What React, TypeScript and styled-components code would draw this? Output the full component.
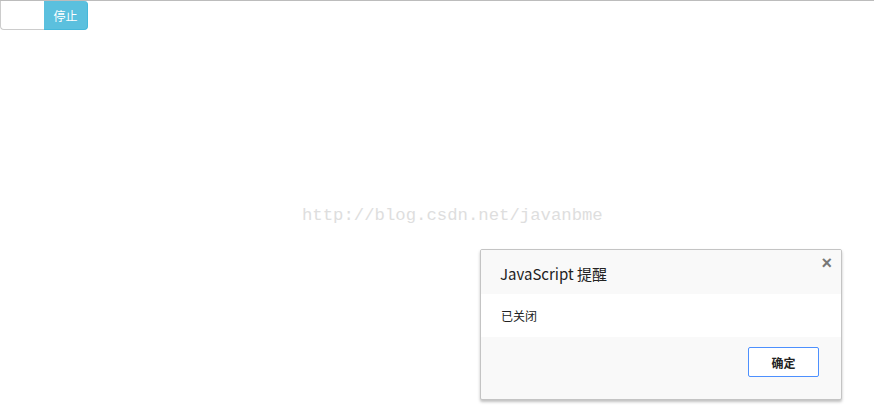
import React from "react";
import styled, { createGlobalStyle } from "styled-components";

const GlobalStyle = createGlobalStyle`
  html, body {
    margin: 0;
    padding: 0;
    background: #ffffff;
  }
  body {
    font-family: "Microsoft YaHei", "Noto Sans CJK SC", "Liberation Sans", sans-serif;
  }
`;

const App = () => {
  return (
    <Page>
      <GlobalStyle />
      <TopLine />
      <Toolbar>
        <Field />
        <StopButton>停止</StopButton>
      </Toolbar>
      <Watermark>http://blog.csdn.net/javanbme</Watermark>
      <Dialog>
        <DialogHeader>
          <Title>JavaScript 提醒</Title>
          <Close>×</Close>
        </DialogHeader>
        <DialogBody>已关闭</DialogBody>
        <DialogFooter>
          <OkButton>确定</OkButton>
        </DialogFooter>
      </Dialog>
    </Page>
  );
};

export default App;

const Page = styled.div`
  position: relative;
  width: 874px;
  height: 412px;
  overflow: hidden;
`;

const TopLine = styled.div`
  height: 1px;
  background-color: #bcbcbc;
`;

const Toolbar = styled.div`
  display: flex;
  height: 30px;
`;

const Field = styled.div`
  width: 43px;
  height: 28px;
  border: 1px solid #cccccc;
  border-right: none;
  border-top: none;
  border-radius: 0 0 0 4px;
  background: #ffffff;
`;

const StopButton = styled.div`
  width: 44px;
  height: 29px;
  background-color: #5bc0de;
  color: #ffffff;
  font-size: 12px;
  display: flex;
  align-items: center;
  justify-content: center;
  border-radius: 0 4px 4px 0;
  box-sizing: border-box;
  border-right: 1px solid #46b8da;
  border-bottom: 1px solid #46b8da;
`;

const Watermark = styled.div`
  position: absolute;
  left: 302px;
  top: 206px;
  font-family: "Liberation Mono", monospace;
  font-size: 17.3px;
  color: #dedede;
  white-space: nowrap;
`;

const Dialog = styled.div`
  position: absolute;
  left: 480px;
  top: 249px;
  width: 360px;
  border: 1px solid #c4c4c4;
  border-radius: 2px;
  box-shadow: 0 2px 3px rgba(0, 0, 0, 0.25);
  background: #f9f9f9;
  overflow: hidden;
`;

const DialogHeader = styled.div`
  position: relative;
  height: 44px;
  padding-left: 19px;
  display: flex;
  align-items: center;
  background: #f9f9f9;
`;

const Title = styled.div`
  font-size: 15px;
  color: #222222;
  padding-top: 2px;
`;

const Close = styled.div`
  position: absolute;
  right: 9px;
  top: 3px;
  font-family: "Liberation Sans", sans-serif;
  font-size: 18px;
  font-weight: bold;
  color: #777777;
`;

const DialogBody = styled.div`
  height: 43px;
  background: #ffffff;
  padding-left: 20px;
  display: flex;
  align-items: center;
  font-size: 12px;
  color: #222222;
`;

const DialogFooter = styled.div`
  height: 62px;
  display: flex;
  justify-content: flex-end;
  align-items: flex-start;
  padding: 10px 22px 0 0;
  box-sizing: border-box;
`;

const OkButton = styled.div`
  width: 71px;
  height: 30px;
  box-sizing: border-box;
  border: 1px solid #4d90fe;
  border-radius: 2px;
  background: #ffffff;
  display: flex;
  align-items: center;
  justify-content: center;
  font-size: 12px;
  font-weight: bold;
  color: #222222;
`;
